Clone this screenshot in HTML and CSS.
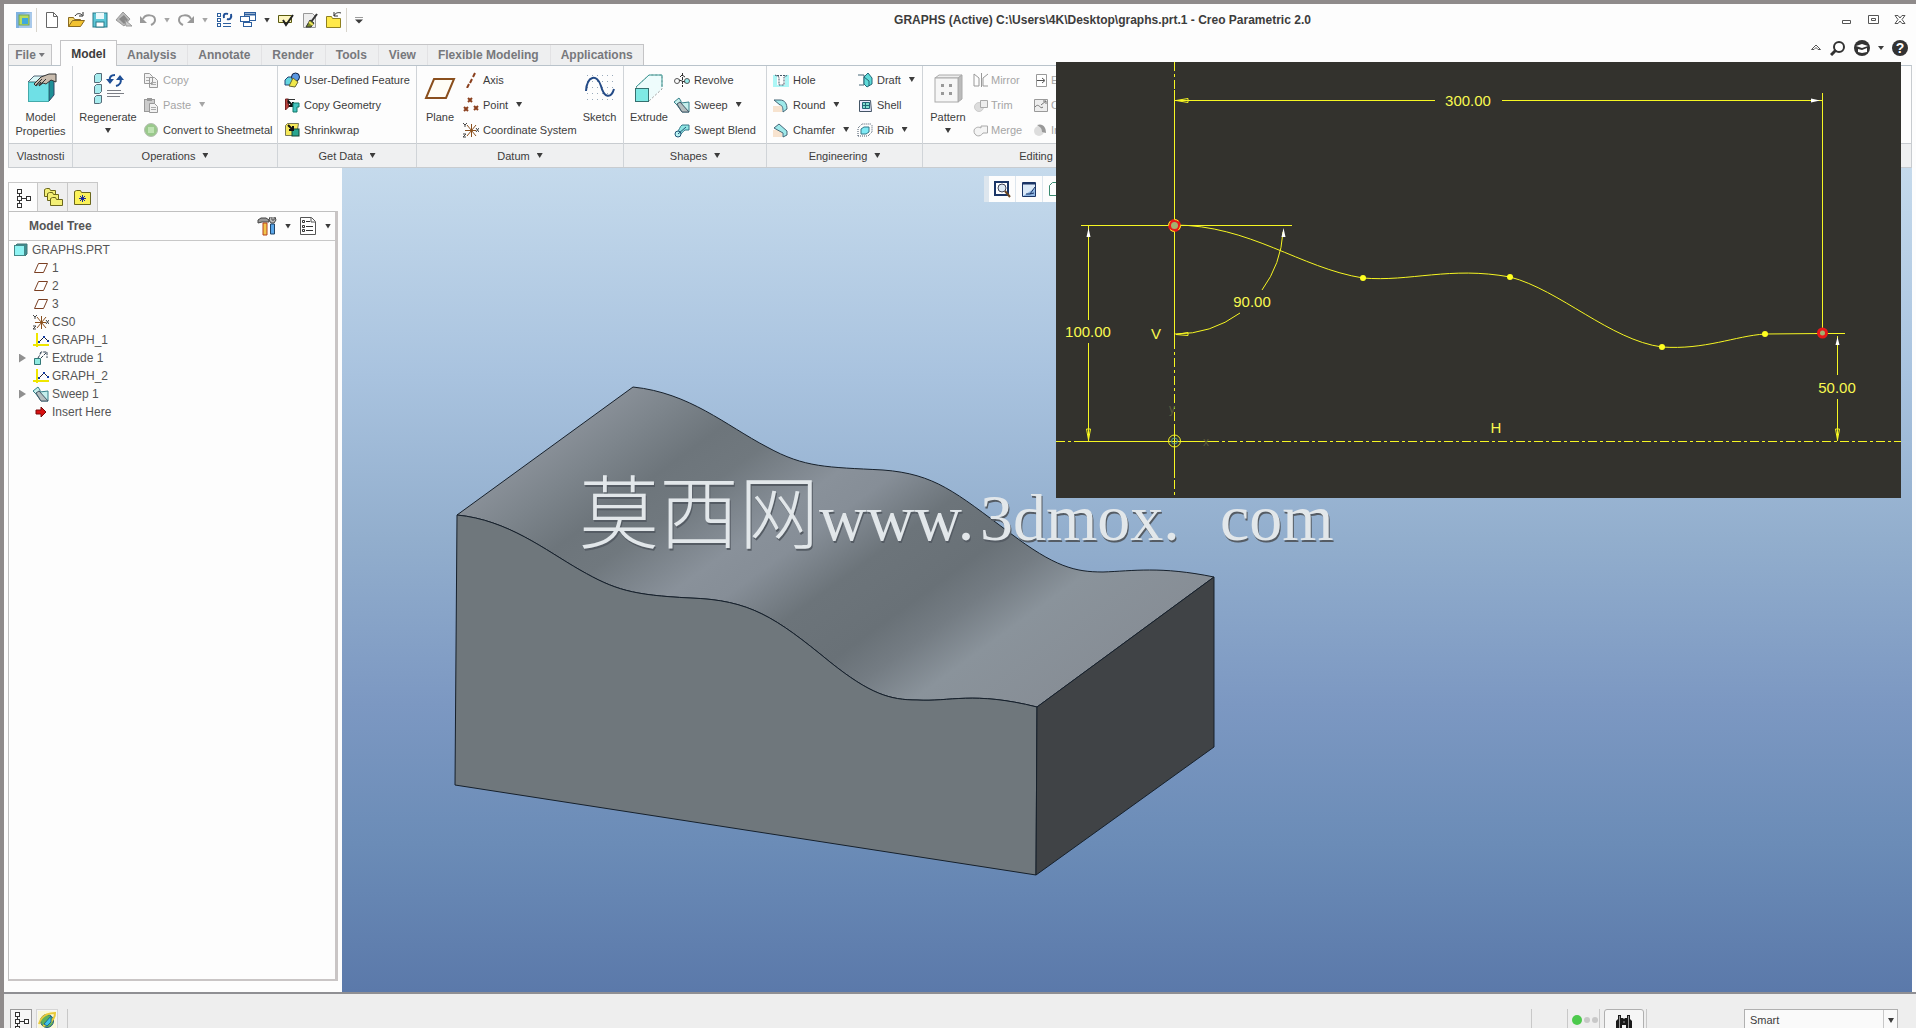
FILE: index.html
```html
<!DOCTYPE html>
<html lang="en">
<head>
<meta charset="utf-8">
<title>GRAPHS (Active) - Creo Parametric 2.0</title>
<link rel="stylesheet" href="styles.css">
</head>
<body>
<svg class="sprite" aria-hidden="true">
  <symbol id="app" viewBox="0 0 18 18"><rect x="1" y="1" width="16" height="16" fill="#a9c9ea"/><path d="M1 1h16L4 4v13H1z" fill="#7fb2e0"/><rect x="4" y="4" width="10" height="10" fill="#b9dc5a" stroke="#6ea35d"/><rect x="7" y="7" width="6" height="6" fill="#3fa8dc"/></symbol>
  <symbol id="new" viewBox="0 0 18 18"><path d="M3.500 1.500h7l4 4v11h-11zM10.500 1.500v4h4" fill="#fff" stroke="#666"/></symbol>
  <symbol id="open" viewBox="0 0 18 18"><path d="M1.500 15.500v-9h5l1 2h6v2" fill="#f5d76a" stroke="#8a6a20"/><path d="M1.500 15.500l4-6h12l-4 6z" fill="#f2c230" stroke="#8a6a20"/><path d="M8 5c2-3 5-3 7-1M16 1v4h-4" fill="none" stroke="#222"/></symbol>
  <symbol id="save" viewBox="0 0 18 18"><rect x="2" y="2" width="14" height="14" fill="#5cc6d6" stroke="#2a7a8a"/><rect x="5" y="2" width="8" height="6" fill="#eaf9fb"/><rect x="5" y="11" width="8" height="5" fill="#fff" stroke="#2a7a8a"/></symbol>
  <symbol id="diam" viewBox="0 0 18 18"><path d="M8 1l7 7-6 7-8-6z" fill="#bbb" stroke="#999"/><path d="M4 8l5-4 4 5-4 4z" fill="#888"/><path d="M10 9l7 6h-6z" fill="#ccc" stroke="#999"/></symbol>
  <symbol id="undo" viewBox="0 0 18 18"><path d="M4 8c2-5 12-5 12 1 0 3-2 4-4 5" fill="none" stroke="#999" stroke-width="2"/><path d="M1 5v7h7z" fill="#999"/></symbol>
  <symbol id="redo" viewBox="0 0 18 18"><path d="M14 8C12 3 2 3 2 9c0 3 2 4 4 5" fill="none" stroke="#999" stroke-width="2"/><path d="M17 5v7h-7z" fill="#999"/></symbol>
  <symbol id="regs" viewBox="0 0 18 18"><g fill="#fff" stroke="#2d5f9e"><rect x="2.500" y="2.500" width="3" height="3"/><rect x="2.500" y="7.500" width="3" height="3"/><rect x="2.500" y="12.500" width="3" height="3"/><path d="M8 12.500h8M8 15.500h8"/></g><path d="M9 7c-1-4 1-5 4-4M16 3c1 4-1 6-4 5" fill="none" stroke="#1f4f96" stroke-width="2"/></symbol>
  <symbol id="wins" viewBox="0 0 18 18"><g fill="#fff" stroke="#2d5f9e"><rect x="5.500" y="1.500" width="11" height="8"/><path d="M5.500 3.500h11" stroke-width="2"/><rect x="1.500" y="5.500" width="9" height="5"/><rect x="4.500" y="11.500" width="8" height="4"/></g></symbol>
  <symbol id="chk" viewBox="0 0 18 18"><path d="M1.500 4.500h13v7h-13z" fill="#fdf6c0" stroke="#5a5a10"/><path d="M6 9l3 5 7-10" fill="none" stroke="#222" stroke-width="2"/></symbol>
  <symbol id="brush" viewBox="0 0 18 18"><path d="M2.500 2.500h9l3 3v11h-12z" fill="#eee" stroke="#999"/><path d="M16 3l-6 8" stroke="#333" stroke-width="2"/><path d="M5 16l4-7 4 3-3 4z" fill="#7b8a2a" stroke="#333"/><path d="M8 11l4 3" stroke="#eee35a" stroke-width="2"/></symbol>
  <symbol id="fold" viewBox="0 0 18 18"><path d="M1.500 16.500v-11h5l1 2h8v9z" fill="#ffe94a" stroke="#8f8020"/><path d="M9 5c1-3 4-4 7-3M9 1v4h4" fill="none" stroke="#333"/></symbol>
  <symbol id="props" viewBox="0 0 32 32"><path d="M3 10l6-6h20l-5 6z" fill="#d9f7f7" stroke="#567"/><path d="M24 10l5-6v19l-5 6z" fill="#1e8f96" stroke="#346"/><rect x="3.500" y="10.500" width="20" height="19" fill="#6fe0e6" stroke="#4aa"/><path d="M9 12l7-7 8-3h7v8l-5-2-5 4-3-1-4 3 2-4-5 4z" fill="#c9bcae" stroke="#333"/><path d="M11 13l6-6M15 13l6-6" stroke="#333"/></symbol>
  <symbol id="regen" viewBox="0 0 32 32"><g fill="#a7ecee" stroke="#556b78"><path d="M2.500 3.500l2-2h5v7l-2 2h-5zM2.500 14.500l2-2h5v7l-2 2h-5zM2.500 25.500l2-2h5v7l-2 1h-5z"/></g><path d="M18 9c-1-4 1-6 5-6M28 6c2 4 0 7-4 8" fill="none" stroke="#1f4f96" stroke-width="2"/><path d="M14 7h8l-4 5zM24 8h8l-4-5z" fill="#1f4f96"/><path d="M15 18.500h14M15 21.500h17M15 24.500h13" stroke="#7c7f86"/></symbol>
  <symbol id="copy" viewBox="0 0 16 16"><path d="M1.500 1.500h5l3 3v7h-8zM6.500 5.500h5l3 3v7h-8z" fill="#f2f2f2" stroke="#999"/><path d="M3 5.500h4M3 8.500h3M8 10.500h5M8 12.500h5" stroke="#aaa"/></symbol>
  <symbol id="paste" viewBox="0 0 16 16"><rect x="1.500" y="2.500" width="10" height="12" fill="#ccc" stroke="#999"/><rect x="4" y="1" width="5" height="3" fill="#999"/><path d="M6.500 6.500h5l3 3v6h-8z" fill="#f2f2f2" stroke="#999"/><path d="M8 10.500h5M8 12.500h5" stroke="#aaa"/></symbol>
  <symbol id="metal" viewBox="0 0 16 16"><circle cx="8" cy="8" r="6.500" fill="#9ac98c" stroke="#b5bfb2"/><path d="M5 5h6v6H5z" fill="#bfe3b3"/></symbol>
  <symbol id="udf" viewBox="0 0 16 16"><path d="M1 8l3-3h5v8H1z" fill="#64d6df" stroke="#247"/><circle cx="11.500" cy="5" r="4" fill="#5a97e0" stroke="#124"/><path d="M5 14l4-8 5 4-3 5z" fill="#f0e84a" stroke="#663"/></symbol>
  <symbol id="cgeo" viewBox="0 0 16 16"><path d="M1.500 13V2h3v8z" fill="#b8413c" stroke="#722"/><path d="M4 2.500h7M4 2v5" stroke="#333"/><path d="M4 4l5 5M9 5v4H5" fill="none" stroke="#111" stroke-width="2"/><path d="M9 6h6v4h-2v5H9z" fill="#43c3c0" stroke="#176"/></symbol>
  <symbol id="shrink" viewBox="0 0 16 16"><path d="M1.500 3.500l2-2h11l-2 12h-11z" fill="#f5e85a" stroke="#775"/><rect x="8" y="7" width="7" height="7" fill="#2aa58f" stroke="#143"/><path d="M4 3l5 5M9 4v4H5" fill="none" stroke="#111" stroke-width="2"/></symbol>
  <symbol id="plane" viewBox="0 0 32 32"><path d="M10 7h20l-8 19H2z" fill="#fffdf6" stroke="#8a4f1d" stroke-width="2"/></symbol>
  <symbol id="axis" viewBox="0 0 16 16"><path d="M12 1l-2 4M9 7l-2 4M6 12l-2 4" stroke="#8a3f1d" stroke-width="2"/></symbol>
  <symbol id="point" viewBox="0 0 16 16"><path d="M5 1l4 4m0-4L5 5M1 10l4 4m0-4l-4 4M11 9l4 4m0-4l-4 4" stroke="#8a3f1d" stroke-width="2"/></symbol>
  <symbol id="csys" viewBox="0 0 16 16"><path d="M2 8.500h11M8.500 2v13M4 3l9 11M13 3L4 14" stroke="#8a4f1d"/><path d="M0 1l2 2 2-2M2 3v2M13 6l3 4m0-4l-3 4M0 12h3l-3 3h3" fill="none" stroke="#444"/></symbol>
  <symbol id="sketch" viewBox="0 0 32 32"><path d="M3 3.500h28M3 9.500h28M3 15.500h28M3 21.500h28M3 27.500h28" stroke="#9ab" stroke-dasharray="1 4"/><path d="M2 19c1-15 11-18 15-5 3 12 10 13 13 3" fill="none" stroke="#234a86" stroke-width="2"/></symbol>
  <symbol id="extrude" viewBox="0 0 32 32"><path d="M3 15L16 3h13v14L16 29z" fill="#eefcfc" stroke="#999" stroke-dasharray="2 2"/><path d="M3 15L16 3h13v12" fill="none" stroke="#3a9a96"/><rect x="2.500" y="16.500" width="13" height="13" fill="#7fe9e4" stroke="#35706f"/></symbol>
  <symbol id="revolve" viewBox="0 0 16 16"><circle cx="3" cy="9" r="2.500" fill="none" stroke="#555"/><circle cx="13" cy="9" r="2.500" fill="#9ee" stroke="#555"/><path d="M8.500 1v14" stroke="#333" stroke-dasharray="3 1"/><path d="M5 8l6 2M6 5l2-2 3 2" fill="none" stroke="#333"/></symbol>
  <symbol id="sweep" viewBox="0 0 16 16"><path d="M0 5l5-4 2 3v2l8-1v10H8L3 8z" fill="#c5efec" stroke="#37808a"/><path d="M3 7l3-2 9 10H8z" fill="#b5bfbf" stroke="#456"/></symbol>
  <symbol id="blend" viewBox="0 0 16 16"><path d="M3 10c2-1 3-6 5-7h7v5h-4c-2 1-4 5-6 5z" fill="#8fe6e4" stroke="#378"/><circle cx="4" cy="12" r="3" fill="#baf3f3" stroke="#257"/><path d="M4 12l8-7" stroke="#257"/></symbol>
  <symbol id="hole" viewBox="0 0 16 16"><path d="M0 3h4v10h8V3h4v12H0z" fill="#adf6f6"/><path d="M2 3l4 2v8h5V5l4-2M4 3.500h9" fill="none" stroke="#456" stroke-dasharray="2 1"/></symbol>
  <symbol id="round" viewBox="0 0 16 16"><path d="M0 9h9v6H0z" fill="#f7e3cf"/><path d="M1 3h6c5 0 7 4 7 9l-4 3c0-5-1-7-3-7z" fill="#9ee9ea" stroke="#467"/></symbol>
  <symbol id="chamfer" viewBox="0 0 16 16"><path d="M0 8h9v7H0z" fill="#f7e3cf"/><path d="M1 6l5-4 8 7v4l-4 2V11z" fill="#9ee9ea" stroke="#467"/></symbol>
  <symbol id="draft" viewBox="0 0 16 16"><path d="M1 3h6v10H2" fill="none" stroke="#467"/><path d="M7 5l4-4 4 5v6l-5 3-3-3z" fill="#5fdad8" stroke="#267"/><path d="M7 5l5 4v5" fill="none" stroke="#267"/></symbol>
  <symbol id="shell" viewBox="0 0 16 16"><path d="M2.500 3.500h11l1 11h-12z" fill="#eef" stroke="#456"/><path d="M5.500 5.500h7v6h-7z" fill="#7fe0cf" stroke="#267"/><path d="M8.500 5v7M5 8.500h8" stroke="#267"/></symbol>
  <symbol id="rib" viewBox="0 0 16 16"><path d="M1 14V6l4-4h9M1 14h10l4-4V3" fill="none" stroke="#456" stroke-dasharray="1 1"/><path d="M4 7l3-2h5v5l-3 2H4z" fill="#7feaf5" stroke="#378"/></symbol>
  <symbol id="pattern" viewBox="0 0 32 32"><path d="M3 6l4-3h23l-4 3z" fill="#eee" stroke="#aaa"/><path d="M26 6l4-3v24l-4 3z" fill="#bbb" stroke="#aaa"/><rect x="3" y="6" width="23" height="24" fill="#f6f6f6" stroke="#aaa"/><path d="M9 12h3v3H9zM17 12h3v3h-3zM9 20h3v3H9zM17 20h3v3h-3z" fill="#999"/></symbol>
  <symbol id="mirror" viewBox="0 0 16 16"><path d="M1 2l5 4v8M1 2v12h5M15 2l-5 4v8h5" fill="none" stroke="#999"/><path d="M8.500 1v14" stroke="#999"/></symbol>
  <symbol id="trim" viewBox="0 0 16 16"><circle cx="6" cy="10" r="4.500" fill="#ddd" stroke="#ccc"/><path d="M7.500 3.500h7v7h-7z" fill="#eee" stroke="#aaa"/></symbol>
  <symbol id="merge" viewBox="0 0 16 16"><path d="M8 4h6.500v7H10c-3 5-9 3-9-2 0-3 4-5 7-3z" fill="#f4f4f4" stroke="#aaa"/></symbol>
  <symbol id="extend" viewBox="0 0 16 16"><path d="M3.500 2.500h10v12h-10z" fill="#fff" stroke="#999"/><path d="M4 8.500h7M9 6l3 2.500L9 11" fill="none" stroke="#555"/></symbol>
  <symbol id="offset" viewBox="0 0 16 16"><path d="M1.500 2.500h13v12h-13z" fill="#eee" stroke="#999"/><path d="M2 10c4-5 5 3 8 0M8 8l5-4M10 4h3v3" fill="none" stroke="#777"/></symbol>
  <symbol id="inter" viewBox="0 0 16 16"><circle cx="6" cy="9" r="5" fill="#ddd"/><path d="M4 3c6-2 9 2 9 8l-4-1c0-4-2-5-5-7z" fill="#999"/></symbol>
  <symbol id="tree" viewBox="0 0 16 20"><path d="M4.500 4v12M6 10.500h5" stroke="#333"/><g fill="#fff" stroke="#333"><rect x="2.500" y="1.500" width="4" height="4"/><rect x="2.500" y="8.500" width="4" height="4"/><rect x="2.500" y="15.500" width="4" height="4"/><rect x="11.500" y="8.500" width="4" height="4"/></g></symbol>
  <symbol id="folders" viewBox="0 0 20 20"><g fill="#f3ef75" stroke="#6a661c"><path d="M1.500 9.500v-7l2-1h3l1 2h5v6z"/><path d="M4.500 13.500v-7l2-1h3l1 2h5v6z"/><path d="M7.500 18.500v-7l2-1h3l1 2h6v6z"/></g></symbol>
  <symbol id="fav" viewBox="0 0 20 20"><path d="M1.500 17.500v-13l2-1h4l1 2h9v12z" fill="#fbf25a" stroke="#6a661c"/><path d="M6 11.500h7M9.500 8v7M7 9l5 5M12 9l-5 5" stroke="#1a2a9a"/></symbol>
  <symbol id="tools" viewBox="0 0 20 20"><path d="M1 7V4l3-2h5l3 2v2H5z" fill="#999" stroke="#444"/><path d="M6 7h4v12H6z" fill="#f2c54c" stroke="#b4401c"/><path d="M18 1l1 3-2 3h-3l-2-3 1-3M15 1v3h2V1" fill="#bbb" stroke="#444"/><path d="M13.500 8h4v10h-4z" fill="#5aa7ea" stroke="#246"/></symbol>
  <symbol id="list" viewBox="0 0 18 20"><path d="M1.500 1.500h11l4 4v13h-15zM12 2v4h4" fill="#fff" stroke="#555"/><path d="M7 5.500h4M7 10.500h7M7 14.500h7" stroke="#333"/><path d="M3.500 4.500h2v2h-2zM3.500 9.500h2v2h-2zM3.500 13.500h2v2h-2z" fill="none" stroke="#333"/></symbol>
  <symbol id="part" viewBox="0 0 16 16"><path d="M2 4l2-2h10v10l-2 2z" fill="#3d8f92" stroke="#477"/><rect x="1.500" y="3.500" width="10" height="10" fill="#8ff3f3" stroke="#488"/></symbol>
  <symbol id="dtm" viewBox="0 0 16 16"><path d="M5.500 3.500h9l-4 9h-9z" fill="#fff" stroke="#7a3f22"/></symbol>
  <symbol id="graph" viewBox="0 0 16 16"><path d="M4 1v14M0 13h16" stroke="#efe600" stroke-width="2"/><path d="M5 11l6-6 4 4" fill="none" stroke="#223"/><path d="M10 4h2v2h-2zM14 8h2v2h-2zM5 9h2v2H5z" fill="#123aa0"/></symbol>
  <symbol id="ext" viewBox="0 0 16 16"><path d="M1.500 8.500h6v6h-6z" fill="#8fe9e0" stroke="#377"/><path d="M7 3.500L8 2h6v6M8 8l6-6M5 8l3-5" fill="none" stroke="#345" stroke-dasharray="3 1"/></symbol>
  <symbol id="ins" viewBox="0 0 16 16"><path d="M3 6h5V3l5 5-5 5v-3H3z" fill="#d81010" stroke="#7a0a0a"/></symbol>
  <symbol id="refit" viewBox="0 0 18 18"><path d="M2 2h13v13H2z" fill="#fff" stroke="#1b3566" stroke-width="2"/><circle cx="9" cy="8" r="4" fill="#dde9f5" stroke="#445"/><path d="M12 11l5 6" stroke="#6a4520" stroke-width="2"/></symbol>
  <symbol id="paint" viewBox="0 0 18 18"><path d="M2.500 2.500h13v14h-13z" fill="#dceaf8" stroke="#1b3566"/><path d="M3 3.500h12" stroke="#1b3566" stroke-width="2"/><path d="M3 16L15 8v8z" fill="#8fb6e2"/><path d="M6 14l4 0 5-7M10 14l4-1" fill="none" stroke="#1b3566"/></symbol>
  <symbol id="box" viewBox="0 0 18 18"><path d="M2.500 5.500l3-3h10v10l-3 3h-10z" fill="#fff" stroke="#3a8a70"/></symbol>
  <symbol id="globe" viewBox="0 0 18 18"><rect width="18" height="18" fill="#faf7d8"/><circle cx="9" cy="10" r="6.500" fill="#5fb05a" stroke="#225c7a"/><path d="M1 13C3 5 10 2 17 2c0 6-5 11-12 13" fill="none" stroke="#e8c93a" stroke-width="2"/><path d="M6 13l7-8v6l-4 4z" fill="#3cc0e8" stroke="#1b6b94"/></symbol>
  <symbol id="bino" viewBox="0 0 18 18"><path d="M3 2h3v3h2l1 1 1-1h2V2h3v4l2 2v10h-6v-6H7v6H1V8l2-2z" fill="#1a1a1a"/><path d="M4.500 3v13M13.500 3v13M8 9h2" stroke="#999"/></symbol>
</svg>

<div class="app">
  <header class="titlebar">
    <div class="quick">
      <svg class="q"><use href="#app"/></svg><span class="vsep"></span>
      <button aria-label="New"><svg class="q"><use href="#new"/></svg></button>
      <button aria-label="Open"><svg class="q"><use href="#open"/></svg></button>
      <button aria-label="Save"><svg class="q"><use href="#save"/></svg></button>
      <button aria-label="Erase"><svg class="q"><use href="#diam"/></svg></button>
      <button aria-label="Undo"><svg class="q"><use href="#undo"/></svg></button>
      <span class="caret dim"></span>
      <button aria-label="Redo"><svg class="q"><use href="#redo"/></svg></button>
      <span class="caret dim"></span>
      <button aria-label="Regenerate"><svg class="q"><use href="#regs"/></svg></button>
      <button aria-label="Windows"><svg class="q"><use href="#wins"/></svg></button>
      <span class="caret"></span>
      <button aria-label="Check"><svg class="q"><use href="#chk"/></svg></button>
      <button aria-label="Appearance"><svg class="q"><use href="#brush"/></svg></button>
      <button aria-label="Working directory"><svg class="q"><use href="#fold"/></svg></button>
      <span class="vsep"></span><span class="caret more"></span>
    </div>
    <h1>GRAPHS (Active) C:\Users\4K\Desktop\graphs.prt.1 - Creo Parametric 2.0</h1>
    <div class="winctl">
      <button aria-label="Minimize"><svg viewBox="0 0 12 12"><path d="M2.500 6.500h8v3h-8z" fill="#fff" stroke="#555"/></svg></button>
      <button aria-label="Restore"><svg viewBox="0 0 12 12"><path d="M1.500 1.500h10v8h-10zM4.500 4.500h4v2h-4z" fill="#fff" stroke="#555"/></svg></button>
      <button aria-label="Close"><svg viewBox="0 0 12 12"><path d="M1 1.500h3l2 2.500 2-2.500h3L8 5.500l3 4H8L6 7 4 9.500H1l3-4z" fill="#fff" stroke="#555"/></svg></button>
    </div>
  </header>

  <nav class="tabs">
    <button class="file">File<span class="caret"></span></button>
    <button class="tab on">Model</button>
    <div class="rest">
      <button class="tab">Analysis</button><button class="tab">Annotate</button><button class="tab">Render</button><button class="tab">Tools</button><button class="tab">View</button><button class="tab">Flexible Modeling</button><button class="tab">Applications</button>
    </div>
    <div class="help">
      <button aria-label="Collapse"><svg width="12" height="16" viewBox="0 0 12 16"><path d="M1.500 9.500L6 5l4.500 4.500H8L6 7.500l-2 2z" fill="#fff" stroke="#555"/></svg></button>
      <button aria-label="Search"><svg width="16" height="16" viewBox="0 0 16 16"><circle cx="9" cy="7" r="5" fill="#fff" stroke="#333" stroke-width="2"/><path d="M6 10l-5 5" stroke="#333" stroke-width="3"/></svg></button>
      <button aria-label="Community"><svg width="16" height="16" viewBox="0 0 16 16"><circle cx="8" cy="8" r="8" fill="#333"/><path d="M2 6l6-2 6 2-6 2zM4 9v3l4 1 5-1V8l-5 2z" fill="#fff"/></svg></button>
      <span class="caret"></span>
      <button class="q-help" aria-label="Help">?</button>
    </div>
  </nav>

  <section class="ribbon">
    <div class="group">
      <div class="body"><button class="big wide"><svg><use href="#props"/></svg>Model<br>Properties</button></div>
      <div class="glabel">Vlastnosti</div>
    </div>
    <div class="group">
      <div class="body">
        <button class="big w70"><svg><use href="#regen"/></svg>Regenerate<span class="caret"></span></button>
        <div class="col">
          <button disabled><svg><use href="#copy"/></svg>Copy</button>
          <button disabled><svg><use href="#paste"/></svg>Paste<span class="caret dim"></span></button>
          <button><svg><use href="#metal"/></svg>Convert to Sheetmetal</button>
        </div>
      </div>
      <div class="glabel">Operations<span class="caret"></span></div>
    </div>
    <div class="group">
      <div class="body pad">
        <div class="col">
          <button><svg><use href="#udf"/></svg>User-Defined Feature</button>
          <button><svg><use href="#cgeo"/></svg>Copy Geometry</button>
          <button><svg><use href="#shrink"/></svg>Shrinkwrap</button>
        </div>
      </div>
      <div class="glabel">Get Data<span class="caret"></span></div>
    </div>
    <div class="group">
      <div class="body">
        <button class="big"><svg><use href="#plane"/></svg>Plane</button>
        <div class="col">
          <button><svg><use href="#axis"/></svg>Axis</button>
          <button><svg><use href="#point"/></svg>Point<span class="caret"></span></button>
          <button><svg><use href="#csys"/></svg>Coordinate System</button>
        </div>
        <button class="big"><svg><use href="#sketch"/></svg>Sketch</button>
      </div>
      <div class="glabel">Datum<span class="caret"></span></div>
    </div>
    <div class="group">
      <div class="body">
        <button class="big w50"><svg><use href="#extrude"/></svg>Extrude</button>
        <div class="col">
          <button><svg><use href="#revolve"/></svg>Revolve</button>
          <button><svg><use href="#sweep"/></svg>Sweep<span class="caret"></span></button>
          <button><svg><use href="#blend"/></svg>Swept Blend</button>
        </div>
      </div>
      <div class="glabel">Shapes<span class="caret"></span></div>
    </div>
    <div class="group">
      <div class="body pad">
        <div class="col c84">
          <button><svg><use href="#hole"/></svg>Hole</button>
          <button><svg><use href="#round"/></svg>Round<span class="caret"></span></button>
          <button><svg><use href="#chamfer"/></svg>Chamfer<span class="caret"></span></button>
        </div>
        <div class="col">
          <button><svg><use href="#draft"/></svg>Draft<span class="caret"></span></button>
          <button><svg><use href="#shell"/></svg>Shell</button>
          <button><svg><use href="#rib"/></svg>Rib<span class="caret"></span></button>
        </div>
      </div>
      <div class="glabel">Engineering<span class="caret"></span></div>
    </div>
    <div class="group">
      <div class="body">
        <button class="big w50"><svg><use href="#pattern"/></svg>Pattern<span class="caret"></span></button>
        <div class="col c60">
          <button disabled><svg><use href="#mirror"/></svg>Mirror</button>
          <button disabled><svg><use href="#trim"/></svg>Trim</button>
          <button disabled><svg><use href="#merge"/></svg>Merge</button>
        </div>
        <div class="col tight">
          <button disabled><svg><use href="#extend"/></svg>Extend</button>
          <button disabled><svg><use href="#offset"/></svg>Offset</button>
          <button disabled><svg><use href="#inter"/></svg>Intersect</button>
        </div>
      </div>
      <div class="glabel">Editing<span class="caret"></span></div>
    </div>
    <div class="group"><div class="body"></div><div class="glabel"></div></div>
  </section>

  <main class="work">
    <aside class="side">
      <div class="sidetabs">
        <button class="on" aria-label="Model Tree"><svg width="16" height="20"><use href="#tree"/></svg></button>
        <button aria-label="Folder Browser"><svg width="20" height="20"><use href="#folders"/></svg></button>
        <button aria-label="Favorites"><svg width="20" height="20"><use href="#fav"/></svg></button>
      </div>
      <div class="panel">
        <div class="phead">
          <h2>Model Tree</h2>
          <button aria-label="Settings"><svg width="20" height="20"><use href="#tools"/></svg><span class="caret"></span></button>
          <button aria-label="Show"><svg width="18" height="20"><use href="#list"/></svg><span class="caret"></span></button>
        </div>
        <ul class="mtree">
          <li class="root"><svg><use href="#part"/></svg>GRAPHS.PRT</li>
          <li><svg><use href="#dtm"/></svg>1</li>
          <li><svg><use href="#dtm"/></svg>2</li>
          <li><svg><use href="#dtm"/></svg>3</li>
          <li><svg><use href="#csys"/></svg>CS0</li>
          <li><svg><use href="#graph"/></svg>GRAPH_1</li>
          <li class="fold"><svg><use href="#ext"/></svg>Extrude 1</li>
          <li><svg><use href="#graph"/></svg>GRAPH_2</li>
          <li class="fold"><svg><use href="#sweep"/></svg>Sweep 1</li>
          <li><svg><use href="#ins"/></svg>Insert Here</li>
        </ul>
      </div>
    </aside>

    <section class="view">
      <svg class="scene" viewBox="342 168 1570 824" preserveAspectRatio="xMinYMin meet">
        <defs>
          <linearGradient id="top" gradientUnits="userSpaceOnUse" x1="457" y1="515" x2="749" y2="917">
            <stop offset="0" stop-color="#888f97"/><stop offset=".07" stop-color="#7d858c"/><stop offset=".17" stop-color="#6d757b"/><stop offset=".25" stop-color="#70787e"/><stop offset=".38" stop-color="#89919a"/><stop offset=".45" stop-color="#868e97"/><stop offset=".56" stop-color="#6c747a"/><stop offset=".68" stop-color="#697177"/><stop offset=".75" stop-color="#747c83"/><stop offset=".84" stop-color="#8a939b"/><stop offset="1" stop-color="#878e96"/>
          </linearGradient>
        </defs>
        <g stroke="#16202b" stroke-linejoin="round">
          <path fill="url(#top)" d="M457 515L633 387C690 393 725 425 767 447C805 468 827 467 883 470C935 474 955 492 1010 533C1055 567 1075 572 1103 572C1133 571 1160 566 1214 577L1037 707C973 691 950 702 917 700C890 700 870 694 830 662C775 617 750 600 690 598C632 595 615 590 580 570C545 550 508 520 457 515z"/>
          <path fill="#6f777c" d="M457 515C508 520 545 550 580 570C615 590 632 595 690 598C750 600 775 617 830 662C870 694 890 700 917 700C950 702 973 691 1037 707L1036 875L455 785z"/>
          <path fill="#404346" d="M1037 707L1214 577V747L1036 875z"/>
        </g>
        <g class="mark"><text x="579" y="542" class="cjk">莫西网</text><text y="540" class="lat"><tspan x="819">www. </tspan><tspan x="980">3dmox. </tspan><tspan x="1220">com</tspan></text></g>
      </svg>
      <div class="vtools">
        <button aria-label="Refit"><svg width="18" height="18"><use href="#refit"/></svg></button>
        <button aria-label="Repaint"><svg width="18" height="18"><use href="#paint"/></svg></button>
        <button aria-label="Display style"><svg width="18" height="18"><use href="#box"/></svg></button>
      </div>
    </section>
  </main>

  <footer class="status">
    <button class="sbtn down" aria-label="Navigator"><svg width="16" height="20"><use href="#tree"/></svg></button>
    <button class="sbtn" aria-label="Browser"><svg width="18" height="18"><use href="#globe"/></svg></button>
    <span class="ssep"></span>
    <span class="ssep push"></span>
    <div class="lights"><i class="go"></i><i></i><i></i></div>
    <button class="find" aria-label="Find"><svg width="18" height="18"><use href="#bino"/></svg></button>
    <span class="ssep"></span>
    <div class="filter">
      <select aria-label="Selection filter"><option>Smart</option></select>
      <span class="caret"></span>
    </div>
  </footer>

  <div class="sketch">
    <svg viewBox="1056 62 845 436">
      <g fill="none" stroke="#f6f622">
        <path stroke-dasharray="9 3 3 3" d="M1174.500 62v33M1174.500 340v84M1174.500 480v18M1210 441.500h691M1056 441.500h24"/>
        <path d="M1174.500 90v252M1174.500 424v54M1080 441.500h130M1175 100.500h260M1502 100.500h320M1822.500 93v240M1081 225.500h211M1088.500 226v94M1088.500 343v98M1837.500 336v39M1837.500 399v42M1815 333.500h30"/>
        <path d="M1283 232A109 109 0 0 1 1262 290M1240 313A109 109 0 0 1 1175 334"/>
        <path d="M1174 225C1250 225 1300 268 1363 278C1410 282 1450 266 1510 277C1560 290 1610 340 1662 347C1705 350 1735 336 1765 334L1822 333.500"/>
        <path d="M1176 100.500l12-2v4zM1176 334.500l12-2v3zM1088.500 440l-2-11h4zM1837.500 440l-2-11h4z"/>
        <circle cx="1174.500" cy="441" r="6"/><path d="M1163 441.500h23M1174.500 430v23"/>
      </g>
      <circle cx="1174.500" cy="441" r="3" fill="none" stroke="#4f9a90"/>
      <g fill="#fff"><path d="M1088.500 228l2 9h-4zM1283.500 228l2 9h-4zM1837.500 337l2 8h-4zM1820 100.500l-9-2v4z"/></g>
      <g fill="#ffff20"><circle cx="1363" cy="278" r="3"/><circle cx="1510" cy="277" r="3"/><circle cx="1662" cy="347" r="3"/><circle cx="1765" cy="334" r="3"/></g>
      <path d="M1174.500 213v24" stroke="#f6f622"/>
      <g stroke="#e81818" stroke-width="3" fill="#a5b070"><circle cx="1174.500" cy="225.500" r="5"/><circle cx="1822.500" cy="333" r="4"/></g>
      <circle cx="1174.500" cy="225.500" r="6" fill="none" stroke="#f6f622" stroke-dasharray="5 4"/>
      <g class="dims"><text x="1468" y="106">300.00</text><text x="1088" y="337">100.00</text><text x="1252" y="307">90.00</text><text x="1837" y="393">50.00</text><text x="1156" y="339">V</text><text x="1496" y="433">H</text></g>
      <g class="faint"><text x="1172" y="413">y</text><text x="1206" y="446">x</text></g>
    </svg>
  </div>
</div>
</body>
</html>
```

FILE: styles.css
```css
* { box-sizing: border-box; }
body { margin: 0; font: 11px/14px "Liberation Sans", Arial, sans-serif; color: #3c3c3c; }
button { font: inherit; color: inherit; background: none; border: 0; padding: 0; margin: 0; }
svg { display: block; flex: none; }
.sprite { display: none; }
h1, h2 { margin: 0; font-size: 12px; line-height: 16px; }

.app {
  position: relative;
  display: flex;
  flex-direction: column;
  height: 100vh;
  overflow: hidden;
  background: #fdfdfd;
  border-left: 4px double #8f8b8b;
  border-top: 4px double #8f8b8b;
  border-style: solid none none solid;
}

.caret { flex: none; width: 6px; height: 5px; background: #3c3c3c; clip-path: polygon(0 0, 100% 0, 50% 100%); }
.caret.dim { background: #a5a5a5; }

/* Title bar */
.titlebar { display: flex; align-items: center; height: 32px; padding: 0 10px 0 11px; flex: none; }
.quick { display: flex; align-items: center; gap: 6px; }
.q { width: 18px; height: 18px; }
.quick .vsep { width: 1px; height: 24px; margin-left: -3px; background: #d8d4cc; }
.quick .caret { margin: 0 1px; }
.quick .more { width: 8px; height: 7px; margin: 0 2px; clip-path: polygon(0 0, 100% 0, 100% 1px, 0 1px, 0 3px, 100% 3px, 50% 100%, 0 3px); }
.titlebar h1 { flex: 1; text-align: center; }
.winctl { display: flex; gap: 15px; }
.winctl svg { width: 12px; height: 12px; }

/* Tabs */
.tabs { display: flex; align-items: flex-end; height: 29px; margin: 0 4px; flex: none; font-size: 12px; font-weight: bold; color: #77787c; }
.tabs .file { display: flex; align-items: center; justify-content: center; gap: 3px; width: 44px; height: 21px; background: #f0f0f0; border: 1px solid #c4c4c6; border-bottom: 0; }
.tabs .file .caret { height: 4px; background: #77787c; }
.tab { height: 20px; padding: 0 10px; }
.tab.on { position: relative; z-index: 1; height: 26px; width: 57px; margin: 0 0 -1px 8px; padding: 0; background: #fdfdfd; border: 1px solid #c4c4c6; border-bottom: 0; color: #3c3c3c; }
.rest { display: flex; gap: 1px; height: 21px; background: #eeeff0; border-top: 1px solid #c4c4c6; border-right: 1px solid #c4c4c6; }
.rest .tab + .tab { border-left: 1px solid #e2e2e4; }
.help { display: flex; align-items: center; gap: 8px; margin: 0 4px 9px auto; }
.help .caret { height: 4px; }
.q-help { width: 16px; height: 16px; border-radius: 50%; background: #333; color: #fff; font-size: 14px; line-height: 16px; }

/* Ribbon */
.ribbon { display: grid; grid-template-columns: 64px 205px 139px 207px 143px 156px 240px 1fr; height: 103px; margin: 0 4px; flex: none; border: 1px solid #c8ccd0; border-top-color: #b9c3cb; }
.group { display: flex; flex-direction: column; min-width: 0; border-right: 1px solid #d0d4d8; }
.group:last-child { border-right: 0; }
.body { display: flex; flex: 1; padding-top: 1px; white-space: nowrap; }
.body.pad { padding-left: 6px; }
.glabel { display: flex; align-items: center; justify-content: center; gap: 7px; height: 24px; background: #eff0f1; border-top: 1px solid #c8ccd0; }
.big { display: flex; flex-direction: column; align-items: center; width: 46px; height: 76px; padding-top: 5px; }
.big svg { width: 32px; height: 32px; margin-bottom: 6px; }
.big .caret { margin-top: 4px; }
.big.wide { width: 100%; }
.big.w70 { width: 70px; }
.big.w50 { width: 50px; }
.col { display: flex; flex-direction: column; }
.col.c84 { width: 84px; }
.col.c60 { width: 60px; }
.col button { display: flex; align-items: center; gap: 4px; height: 25px; }
.col.c60 button, .col.tight button { gap: 2px; }
.col svg { width: 16px; height: 16px; }
.col .caret { margin-left: 4px; }
.col button:disabled { color: #a5a5a5; }

/* Workspace */
.work { display: flex; flex: 1; min-height: 0; margin-right: 4px; }
.side { display: flex; flex-direction: column; width: 338px; padding: 14px 4px 11px; flex: none; }
.sidetabs { display: flex; height: 30px; margin-bottom: -1px; }
.sidetabs button { display: flex; align-items: center; justify-content: center; width: 30px; background: #efefef; border: 1px solid #c8c8c8; border-left: 0; }
.sidetabs .on { background: #fdfdfd; border-left: 1px solid #c8c8c8; border-bottom: 0; }
.panel { flex: 1; border: 1px solid #c0c0c0; border-right: 3px solid #c9c5c5; border-bottom: 2px solid #c9c5c5; }
.phead { display: flex; align-items: center; gap: 8px; height: 29px; padding: 0 4px 0 20px; border-bottom: 1px solid #c8c8c8; }
.phead h2 { flex: 1; color: #555; }
.phead button { display: flex; align-items: center; gap: 8px; }
.mtree { margin: 0; padding: 0; list-style: none; font-size: 12px; color: #555; }
.mtree li { display: flex; align-items: center; gap: 3px; height: 18px; padding-left: 24px; }
.mtree svg { width: 16px; height: 16px; }
.mtree .root { padding-left: 4px; }
.mtree .fold { padding-left: 10px; gap: 3px; }
.mtree .fold::before { content: ""; width: 7px; height: 9px; margin-right: 4px; background: #909090; clip-path: polygon(0 0, 100% 50%, 0 100%); }
.view { position: relative; flex: 1; min-width: 0; overflow: hidden; background: linear-gradient(#c5daec, #a9c3df 25%, #92aecd 45%, #7c98c2 65%, #6b8cb7 82%, #5b79aa); }
.scene { width: 100%; height: 100%; }
.mark text { fill: #e2e7ea; filter: drop-shadow(1px 2px 0 #555c64); }
.mark .cjk { font: 300 80px "Noto Sans CJK SC", sans-serif; }
.mark .lat { font: 66px "Liberation Serif", serif; }
.vtools { position: absolute; top: 8px; left: 642px; display: flex; padding-left: 5px; background: #dde6ee; gap: 1px; }
.vtools button { display: flex; align-items: center; justify-content: center; width: 26px; height: 26px; background: #fdfdfd; }

/* Status bar */
.status { display: flex; align-items: flex-start; height: 36px; padding: 15px 18px 0 6px; flex: none; overflow: hidden; background: #eeeeee; border-top: 2px solid #8f8f93; }
.sbtn { display: flex; align-items: flex-start; justify-content: center; width: 22px; height: 22px; margin-right: 4px; padding-top: 1px; border: 1px solid #d5d5d5; background: #f6f6f6; }
.sbtn.down { border-color: #9a9a9a; }
.ssep { width: 1px; height: 24px; margin-left: 5px; background: #c8c8c8; }
.ssep.push { margin-left: auto; }
.lights { display: flex; align-items: center; gap: 2px; height: 22px; width: 33px; margin-left: 35px; padding-left: 4px; border: solid #c8c8c8; border-width: 0 1px; }
.lights i { flex: none; width: 6px; height: 6px; border-radius: 50%; background: #c8c8c8; }
.lights .go { width: 10px; height: 10px; background: #4cc94c; }
.find { display: flex; justify-content: center; width: 40px; height: 24px; margin-left: 4px; padding-top: 3px; background: #f6f6f6; border: 1px solid #b0b0b0; border-radius: 3px; }
.find + .ssep { margin-left: 2px; }
.filter { position: relative; width: 154px; margin-left: 97px; }
.filter select { appearance: none; width: 100%; height: 22px; padding: 0 5px; font: inherit; color: inherit; background: #fafafa; border: 1px solid #b0b0b0; border-radius: 0; }
.filter .caret { position: absolute; right: 4px; top: 9px; }
.filter::after { content: ""; position: absolute; right: 14px; top: 1px; width: 1px; height: 20px; background: #c8c8c8; }

/* Floating sketch window */
.sketch { position: absolute; top: 58px; right: 15px; width: 845px; height: 436px; background: #33322d; }
.dims text { fill: #f8f850; font-size: 15px; text-anchor: middle; }
.faint text { fill: #5b5a3c; font-size: 12px; text-anchor: middle; }
```
